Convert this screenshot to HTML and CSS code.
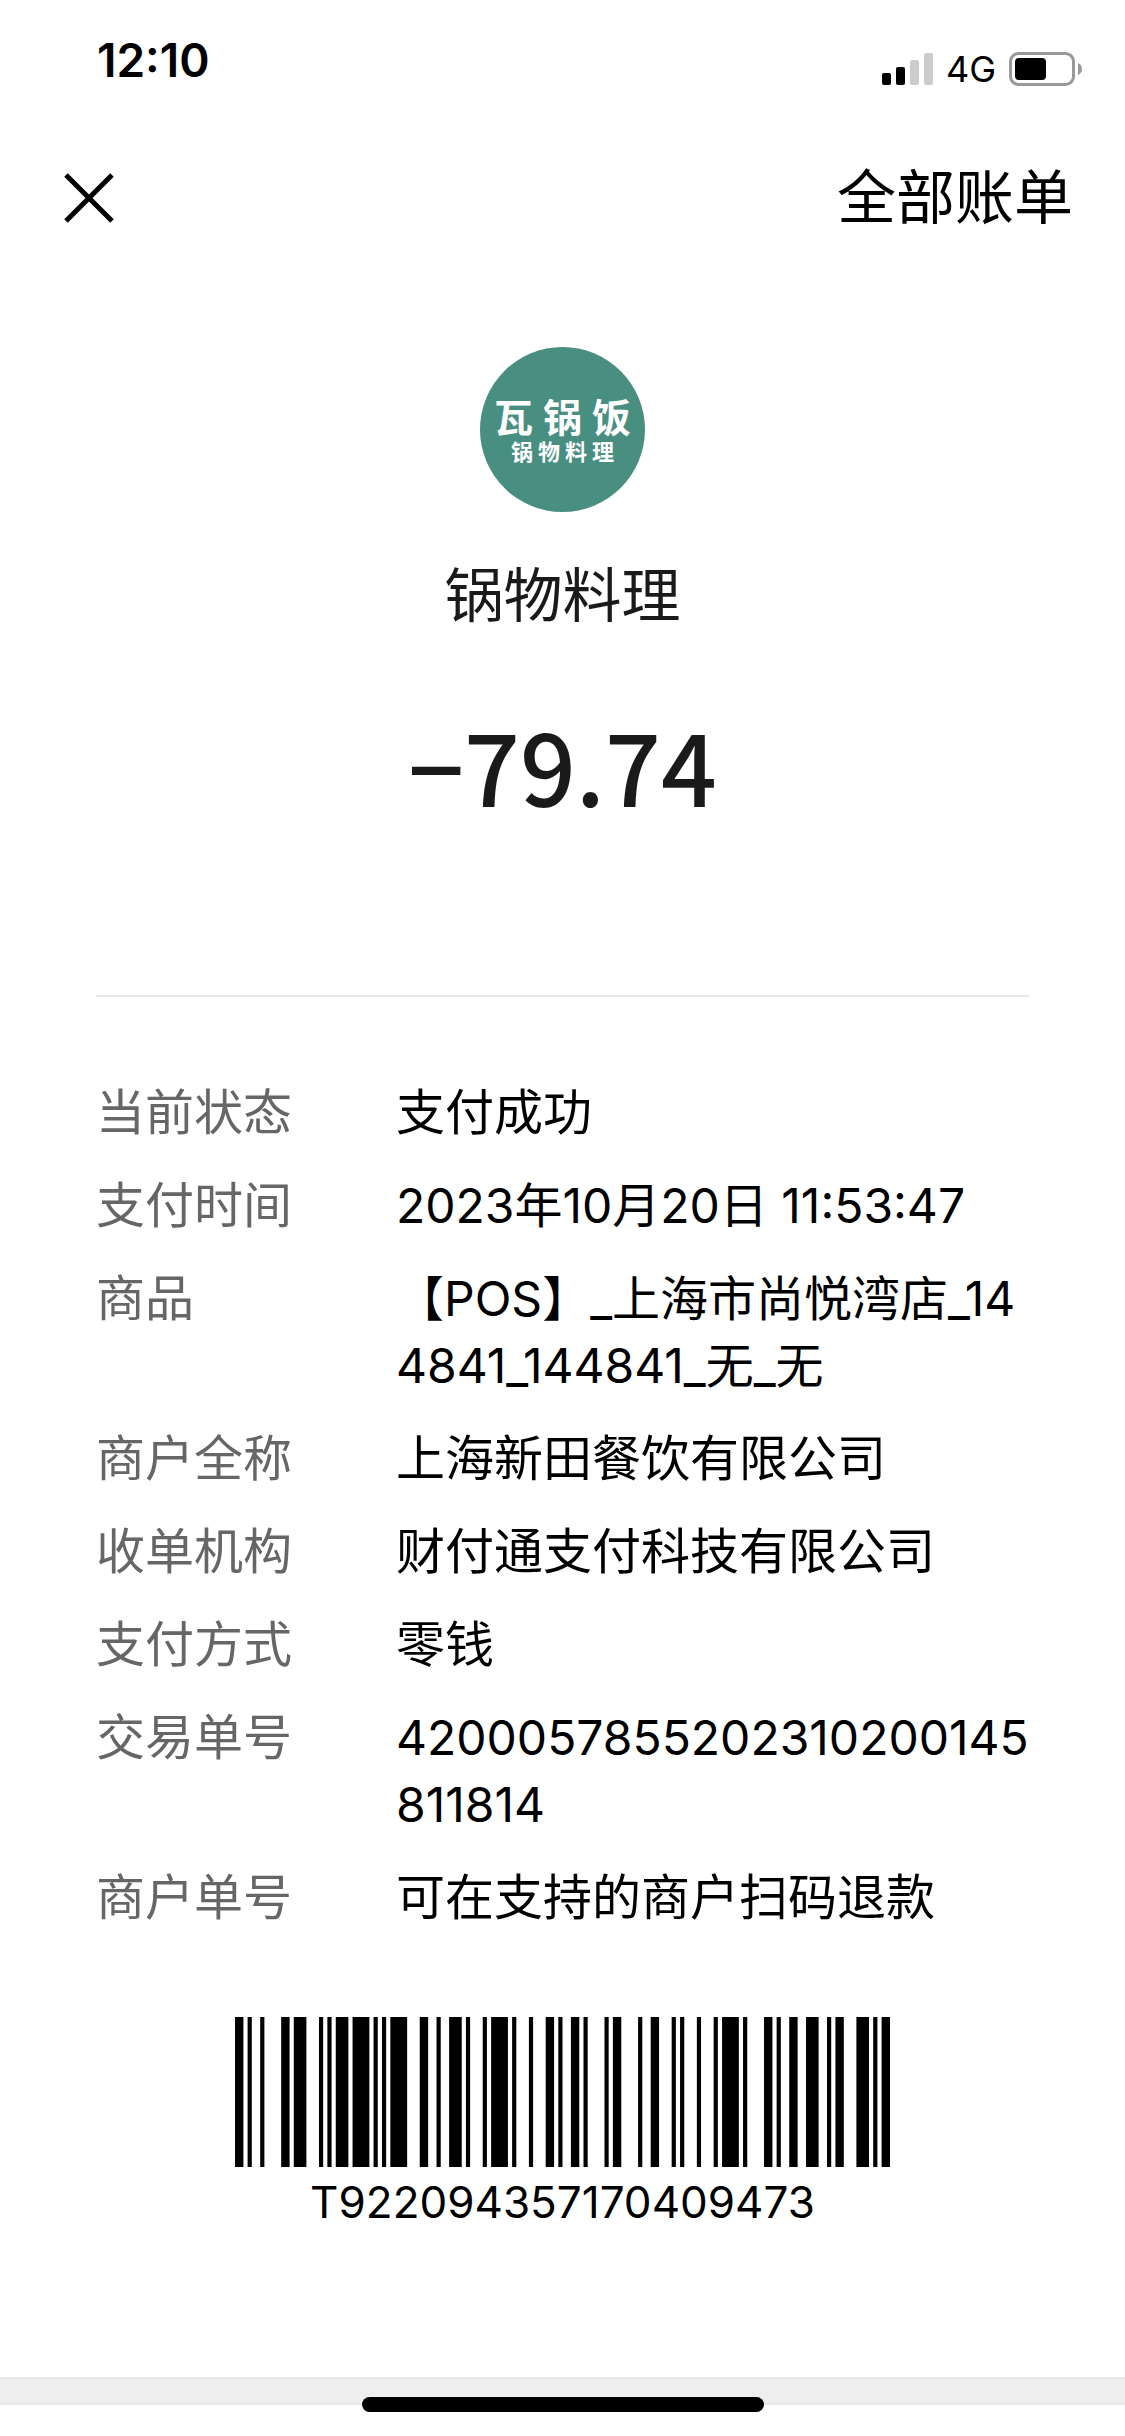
FILE: index.html
```
<!DOCTYPE html>
<html lang="zh-CN">
<head>
<meta charset="utf-8">
<meta name="viewport" content="width=device-width, initial-scale=1">
<title>账单详情</title>
<link rel="stylesheet" href="styles.css">
</head>
<body>
<div class="status-bar">
  <time class="clock">12:10</time>
  <div class="status-icons">
    <svg class="signal" viewBox="0 0 51 32" aria-hidden="true">
      <rect x="0" y="20" width="9" height="12" rx="2"/>
      <rect x="14" y="14" width="9" height="18" rx="2"/>
      <rect class="dim" x="28" y="7" width="9" height="25" rx="2"/>
      <rect class="dim" x="42" y="0" width="9" height="32" rx="2"/>
    </svg>
    <span class="network">4G</span>
    <svg class="battery" viewBox="0 0 74 34" aria-hidden="true">
      <rect class="shell" x="1.5" y="1.5" width="63" height="31" rx="8"/>
      <rect x="6" y="6" width="31" height="22" rx="4"/>
      <path class="nub" d="M69 11 Q73 13 73 17 Q73 21 69 23 Z"/>
    </svg>
  </div>
</div>

<header class="nav">
  <button class="close" type="button" aria-label="关闭">
    <svg viewBox="0 0 50 50" aria-hidden="true"><path d="M2 2 L48 48 M48 2 L2 48"/></svg>
  </button>
  <a class="all-bills" href="#">全部账单</a>
</header>

<main class="bill">
  <section class="summary">
    <div class="logo">
      <div class="logo-title"><span>瓦</span><span>锅</span><span>饭</span></div>
      <div class="logo-sub"><span>锅</span><span>物</span><span>料</span><span>理</span></div>
    </div>
    <h1 class="merchant">锅物料理</h1>
    <p class="amount">−79.74</p>
  </section>

  <dl class="details">
    <div class="row"><dt>当前状态</dt><dd>支付成功</dd></div>
    <div class="row"><dt>支付时间</dt><dd class="numeric">2023年10月20日 11:53:47</dd></div>
    <div class="row"><dt>商品</dt><dd class="numeric">【POS】_上海市尚悦湾店_144841_144841_无_无</dd></div>
    <div class="row"><dt>商户全称</dt><dd>上海新田餐饮有限公司</dd></div>
    <div class="row"><dt>收单机构</dt><dd>财付通支付科技有限公司</dd></div>
    <div class="row"><dt>支付方式</dt><dd>零钱</dd></div>
    <div class="row"><dt>交易单号</dt><dd class="numeric">4200057855202310200145811814</dd></div>
    <div class="row"><dt>商户单号</dt><dd>可在支持的商户扫码退款</dd></div>
  </dl>

  <figure class="barcode">
    <!-- Code 128: each group of six dashes is one symbol, alternating bar and space -->
    <svg viewBox="0 0 156 36" preserveAspectRatio="none" role="img" aria-label="条形码">
      <line x1="0" y1="18" x2="156" y2="18" stroke="#000" stroke-width="36" stroke-dasharray="
        2 1 1 2 1 4  2 1 3 3 1 1  1 1 3 1 4 1  1 1 1 1 4 3  2 2 1 2 3 1
        1 3 1 1 4 1  1 3 1 3 2 1  1 2 2 1 1 4  1 1 2 4 1 2  2 3 1 1 1 3
        1 3 1 1 4 1  1 4 2 1 1 2  2 2 3 2 1 1  2 3 3 1 1 1 2"/>
    </svg>
    <figcaption>T922094357170409473</figcaption>
  </figure>
</main>

<footer class="bottom">
  <div class="band"></div>
  <div class="home-indicator"></div>
</footer>
</body>
</html>
```
FILE: styles.css
```
* { box-sizing: border-box; margin: 0; padding: 0; }

body {
  min-height: 100vh;
  display: flex;
  flex-direction: column;
  background: #fff;
  color: #000;
  font-family: Inter, "Noto Sans CJK SC", sans-serif;
}

.status-bar {
  display: flex;
  justify-content: space-between;
  height: 120px;
  padding: 30px 42px 0 97px;
}
.clock { font-size: 46px; line-height: 60px; font-weight: 600; }
.status-icons { display: flex; align-items: center; height: 78px; }
.signal { width: 51px; height: 32px; }
.signal .dim { fill: #ccc; }
.network { margin: 0 13px; font-size: 36px; line-height: 40px; font-weight: 400; }
.battery { width: 74px; height: 34px; }
.battery .shell { fill: none; stroke: #999; stroke-width: 3; }
.battery .nub { fill: #999; }

.nav {
  display: flex;
  align-items: center;
  justify-content: space-between;
  height: 156px;
  padding: 0 52px 0 64px;
}
.close { border: 0; background: none; width: 50px; height: 50px; cursor: pointer; }
.close svg { display: block; width: 100%; height: 100%; fill: none; stroke: #000; stroke-width: 5; }
.all-bills { color: #000; text-decoration: none; font-size: 59px; line-height: 88px; }

.bill { flex: 1; padding: 0 96px; }

.summary {
  display: flex;
  flex-direction: column;
  align-items: center;
  height: 721px;
  padding-top: 71px;
  border-bottom: 2px solid #e8e8e8;
  color: #1a1a1a;
}
.logo {
  display: flex;
  flex-direction: column;
  align-items: center;
  justify-content: center;
  width: 165px;
  height: 165px;
  border-radius: 50%;
  background: #488e81;
  color: #fff;
  white-space: nowrap;
}
.logo-title { display: flex; gap: 10px; font-size: 39px; line-height: 44px; font-weight: 700; }
.logo-sub { display: flex; gap: 5px; font-size: 22px; line-height: 24px; font-weight: 700; }
.merchant { margin-top: 40px; font-size: 59px; line-height: 88px; font-weight: 400; }
.amount {
  margin-top: 54px;
  font-family: "Noto Sans CJK SC", sans-serif;
  font-size: 98px;
  line-height: 140px;
  font-weight: 500;
}

.details {
  display: flex;
  flex-direction: column;
  gap: 26px;
  padding-top: 82px;
  font-size: 49px;
  line-height: 67px;
}
.row { display: grid; grid-template-columns: 300px minmax(0, 1fr); }
.row dt { color: #666; }
.row dd { word-break: break-all; }
.row .numeric { font-size: 48px; }

.barcode { display: flex; flex-direction: column; align-items: center; padding-top: 86px; }
.barcode svg { width: 655px; max-width: 100%; height: 150px; }
.barcode figcaption { margin-top: 7px; font-size: 44px; line-height: 56px; }

.bottom {
  display: flex;
  flex-direction: column;
  align-items: center;
  padding-bottom: 24px;
}
.band {
  width: 100%;
  height: 28px;
  background: #eee;
  border: solid #e8e8e8;
  border-width: 2px 0;
}
.home-indicator {
  width: 402px;
  height: 15px;
  margin-top: -8px;
  border-radius: 8px;
  background: #000;
}
```
